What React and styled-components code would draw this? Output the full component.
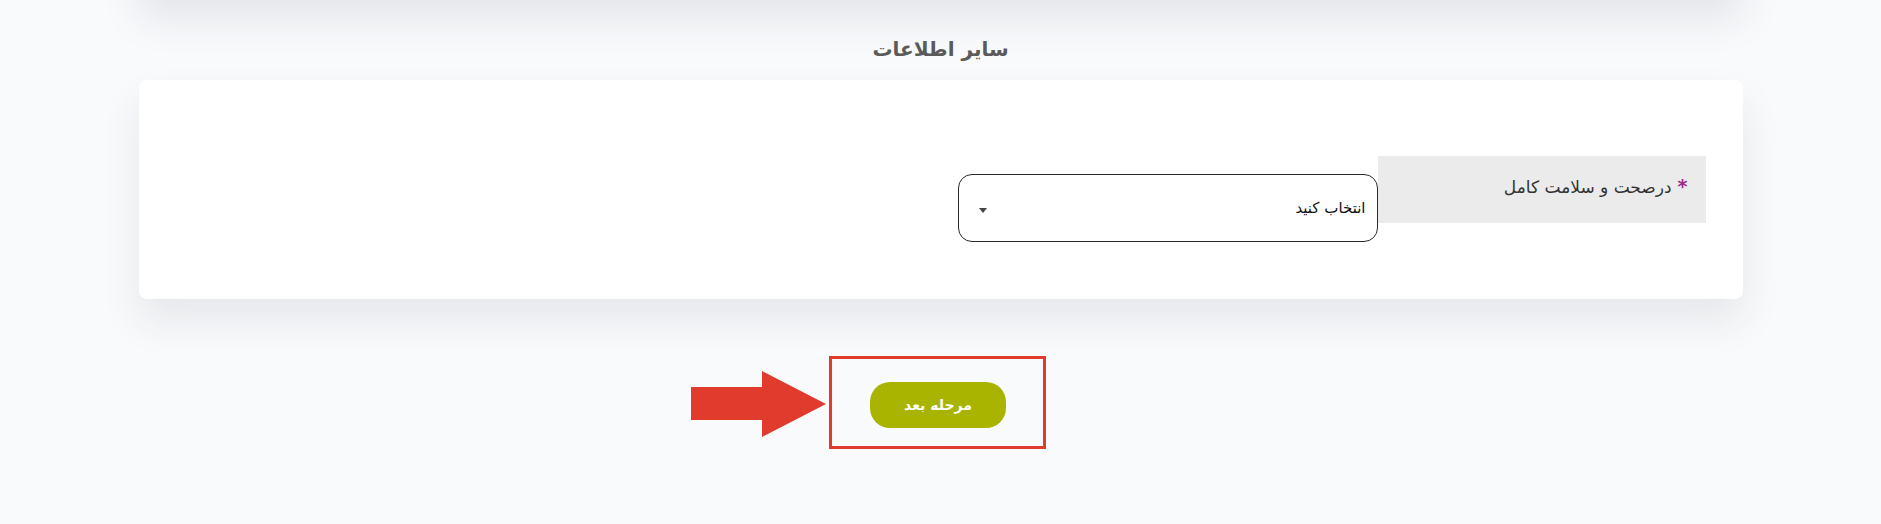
import React from 'react'
import styled, { createGlobalStyle } from 'styled-components'

const GlobalStyle = createGlobalStyle`
  html, body {
    margin: 0;
    padding: 0;
    background: #f9fafc;
    font-family: "DejaVu Sans", "Noto Sans", sans-serif;
  }
`

const Page = styled.div`
  direction: rtl;
  width: 1604px;
  margin: 0 auto;
`

const PrevCard = styled.div`
  height: 60px;
  margin-top: -60px;
  background: #fff;
  border-radius: 8px;
  box-shadow: 0 18px 40px rgba(30, 40, 60, 0.1);
`

const Title = styled.h3`
  margin: 0;
  padding: 38px 0 20px;
  text-align: center;
  font-size: 20px;
  line-height: 22px;
  font-weight: bold;
  color: #5a5a5a;
`

const Card = styled.div`
  background: #fff;
  border-radius: 8px;
  box-shadow: 0 22px 40px rgba(30, 40, 60, 0.09);
  padding: 76px 37px 57px;
`

const Row = styled.div`
  display: flex;
  align-items: flex-start;
`

const Label = styled.div`
  width: 328px;
  height: 67px;
  box-sizing: border-box;
  background: #ebebeb;
  padding: 19px 18px 0 0;
  font-size: 17px;
  color: #333;
`

const Star = styled.span`
  color: #9b2a8c;
  font-weight: bold;
  font-size: 19px;
  margin-left: 6px;
`

const Select = styled.div`
  margin-top: 18px;
  width: 420px;
  height: 68px;
  box-sizing: border-box;
  border: 1px solid #2a2a2a;
  border-radius: 14px;
  display: flex;
  align-items: center;
  justify-content: space-between;
  padding: 0 11px 0 20px;
  font-size: 15px;
  color: #111;
`

const Caret = styled.span`
  width: 0;
  height: 0;
  border-left: 4px solid transparent;
  border-right: 4px solid transparent;
  border-top: 5px solid #444;
  margin-top: 4px;
`

const Actions = styled.div`
  display: flex;
  justify-content: center;
  padding: 57px 6px 0 0;
`

const Highlight = styled.div`
  position: relative;
  border: 3px solid #e03b2c;
  padding: 23px 37px 18px 38px;
`

const NextButton = styled.button`
  width: 136px;
  height: 46px;
  border: none;
  border-radius: 20px;
  background: #a9b400;
  color: #fff;
  font-family: "DejaVu Sans", sans-serif;
  font-weight: bold;
  font-size: 14px;
  cursor: pointer;
`

const Pointer = styled.svg`
  position: absolute;
  left: -141px;
  top: 12px;
`

const App = () => (
  <>
    <GlobalStyle />
    <Page>
      <PrevCard />
      <Title>سایر اطلاعات</Title>
      <Card>
        <Row>
          <Label>
            <Star>*</Star>درصحت و سلامت کامل
          </Label>
          <Select>
            <span>انتخاب کنید</span>
            <Caret />
          </Select>
        </Row>
      </Card>
      <Actions>
        <Highlight>
          <Pointer width="135" height="66" viewBox="0 0 135 66">
            <polygon points="0,16 71,16 71,0 135,33 71,66 71,49 0,49" fill="#e03b2c" />
          </Pointer>
          <NextButton>مرحله بعد</NextButton>
        </Highlight>
      </Actions>
    </Page>
  </>
)

export default App
